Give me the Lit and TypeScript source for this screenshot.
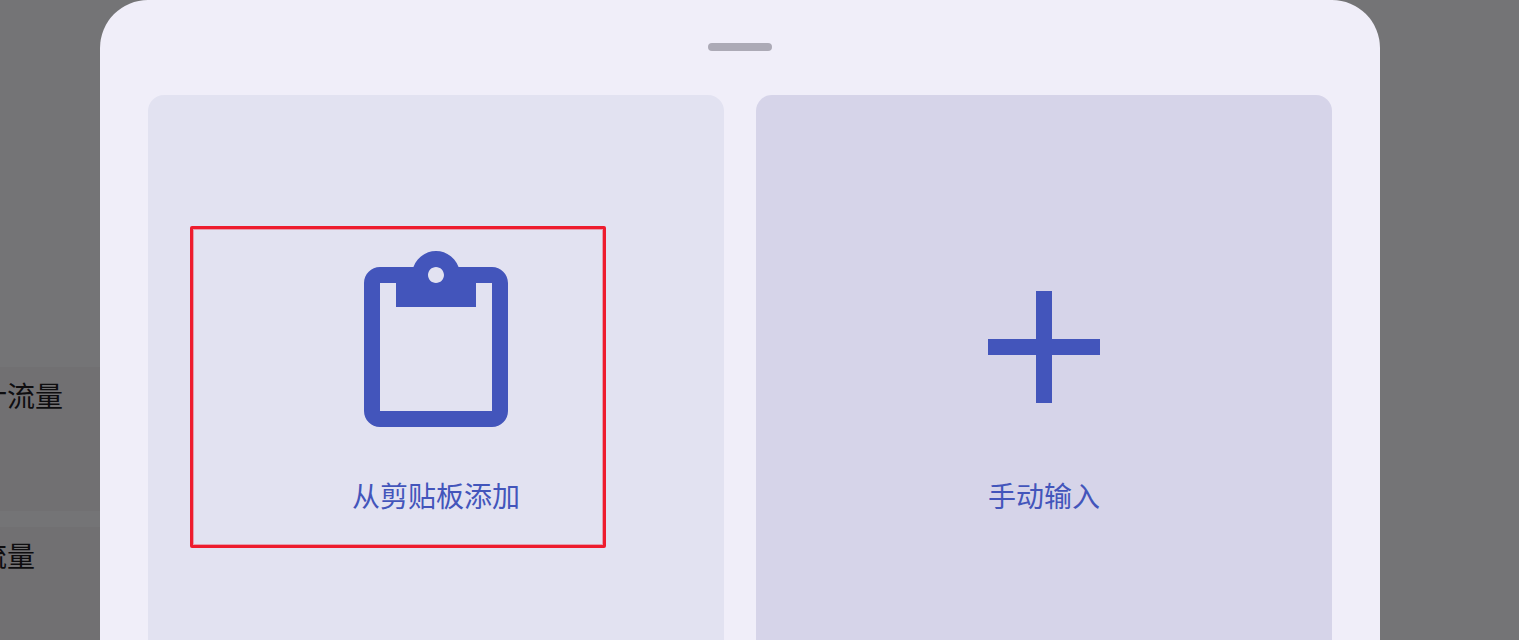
import { LitElement, html, css } from "lit";
import { customElement } from "lit/decorators.js";

@customElement("app-root")
export class AppRoot extends LitElement {
  static styles = css`
    :host {
      display: block;
      position: relative;
      width: 100%;
      height: 640px;
      overflow: hidden;
      background: #e8e8ec;
      font-family: "Noto Sans CJK SC", "Noto Sans", sans-serif;
    }
    .list {
      display: flex;
      flex-direction: column;
      gap: 16px;
      width: 1200px;
      padding-top: 367px;
      margin-left: -21px;
    }
    .row {
      height: 144px;
      box-sizing: border-box;
      padding-top: 8px;
      background: #e2e0e5;
      font-size: 28px;
      line-height: 40px;
      color: #1c1b1f;
    }
    .scrim {
      position: absolute;
      inset: 0;
      background: rgba(0, 0, 0, 0.5);
    }
    .sheet {
      position: absolute;
      top: 0;
      left: 100px;
      width: 1280px;
      box-sizing: border-box;
      padding: 43px 48px 48px;
      display: flex;
      flex-direction: column;
      background: #f0eef9;
      border-radius: 48px 48px 0 0;
    }
    .handle {
      align-self: center;
      width: 64px;
      height: 8px;
      border-radius: 4px;
      background: #acaab6;
      margin-bottom: 44px;
    }
    .cards {
      display: grid;
      grid-template-columns: 1fr 1fr;
      gap: 32px;
    }
    .card {
      aspect-ratio: 1;
      border-radius: 16px;
      display: flex;
      flex-direction: column;
      align-items: center;
      justify-content: center;
      color: #4355bb;
    }
    .a { background: #e2e2f1; }
    .b { background: #d6d4e9; }
    svg {
      display: block;
      width: 192px;
      height: 192px;
      fill: currentColor;
    }
    .label {
      margin-top: 32px;
      font-size: 28px;
      line-height: 40px;
      font-weight: 400;
    }
    .mark {
      position: absolute;
      left: 190px;
      top: 226px;
      width: 416px;
      height: 322px;
      box-sizing: border-box;
      border: 3px solid #ee1c2e;
      border-radius: 2px;
      box-shadow: inset 0 0 0 1px rgba(238, 28, 46, 0.35);
    }
  `;

  render() {
    return html`
      <div class="list">
        <div class="row">计流量</div>
        <div class="row">流量</div>
      </div>
      <div class="scrim"></div>
      <div class="sheet">
        <div class="handle"></div>
        <div class="cards">
          <div class="card a">
            <svg viewBox="0 0 24 24"><path d="M19 2h-4.18C14.4.84 13.3 0 12 0c-1.3 0-2.4.84-2.82 2H5c-1.1 0-2 .9-2 2v16c0 1.1.9 2 2 2h14c1.1 0 2-.9 2-2V4c0-1.1-.9-2-2-2zm-7 0c.55 0 1 .45 1 1s-.45 1-1 1-1-.45-1-1 .45-1 1-1zm7 18H5V4h2v3h10V4h2v16z"/></svg>
            <div class="label">从剪贴板添加</div>
          </div>
          <div class="card b">
            <svg viewBox="0 0 24 24"><path d="M19 13h-6v6h-2v-6H5v-2h6V5h2v6h6v2z"/></svg>
            <div class="label">手动输入</div>
          </div>
        </div>
      </div>
      <div class="mark"></div>
    `;
  }
}
